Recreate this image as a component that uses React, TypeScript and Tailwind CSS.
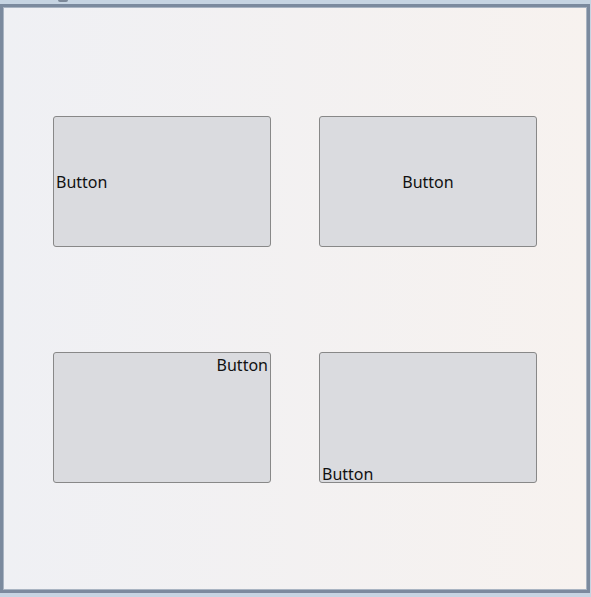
const buttons = [
  { label: "Button", align: "items-center justify-start leading-[20px]" },
  { label: "Button", align: "items-center justify-center leading-[20px]" },
  { label: "Button", align: "items-start justify-end pt-[2px] leading-[20px]" },
  { label: "Button", align: "items-end justify-start leading-[16px]" },
];

export default function App() {
  return (
    <div className="flex h-[597px] w-[591px] flex-col bg-[#c6d4e2] font-['Noto_Sans','Open_Sans',sans-serif]">
      <div className="relative h-[4px] shrink-0">
        <div className="absolute left-[58px] top-0 h-[2px] w-[10px] rounded-b-sm bg-[#7c8898]" />
      </div>
      <div className="h-[589px] w-[590px] border-[3px] border-[#7b8a9e] bg-[#7b8a9e]">
        <div className="flex h-full w-full items-center justify-center border border-[#a9b4c2] bg-gradient-to-r from-[#eff0f4] to-[#f7f2ef] pt-[2px]">
          <div className="grid grid-cols-[218px_218px] gap-x-[48px] gap-y-[105px]">
            {buttons.map((button, i) => (
              <button
                key={i}
                type="button"
                className={`flex h-[131px] rounded-[3px] border border-[#888888] bg-[#dadbdf] px-[2px] text-[16px] text-[#111] ${button.align}`}
              >
                {button.label}
              </button>
            ))}
          </div>
        </div>
      </div>
    </div>
  );
}
